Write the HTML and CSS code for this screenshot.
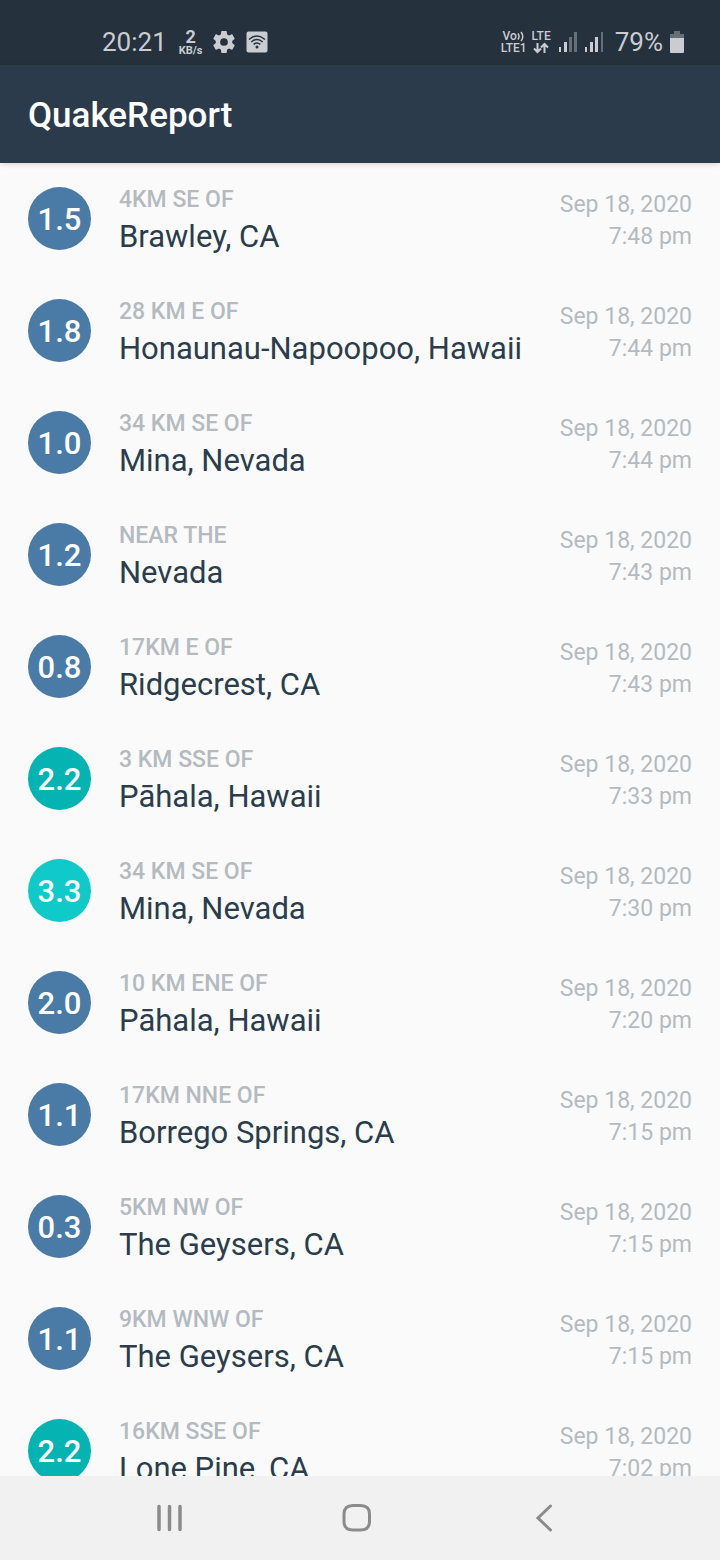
FILE: index.html
```html
<!DOCTYPE html>
<html lang="en">
<head>
<meta charset="utf-8">
<meta name="viewport" content="width=device-width, initial-scale=1">
<title>QuakeReport</title>
<link rel="stylesheet" href="styles.css">
</head>
<body>
<div class="status">
  <div class="status-group">
    <span class="clock">20:21</span>
    <span class="speed"><b class="speed-value">2</b><b class="speed-unit">KB/s</b></span>
    <svg class="gear" width="22" height="22" viewBox="2 2 20 20" aria-hidden="true"><path fill="currentColor" fill-rule="evenodd" d="M19.43 12.98c.04-.32.07-.64.07-.98s-.03-.66-.07-.98l2.11-1.65c.19-.15.24-.42.12-.64l-2-3.46c-.12-.22-.39-.3-.61-.22l-2.49 1c-.52-.4-1.08-.73-1.69-.98l-.38-2.65A.49.49 0 0 0 14 2h-4c-.25 0-.46.18-.49.42l-.38 2.65c-.61.25-1.17.59-1.69.98l-2.49-1c-.23-.09-.49 0-.61.22l-2 3.46c-.13.22-.07.49.12.64l2.11 1.65c-.04.32-.07.65-.07.98s.03.66.07.98l-2.11 1.65c-.19.15-.24.42-.12.64l2 3.46c.12.22.39.3.61.22l2.49-1c.52.4 1.08.73 1.69.98l.38 2.65c.03.24.24.42.49.42h4c.25 0 .46-.18.49-.42l.38-2.65c.61-.25 1.17-.59 1.69-.98l2.49 1c.23.09.49 0 .61-.22l2-3.46c.12-.22.07-.49-.12-.64zM12 15.500a3.500 3.500 0 1 1 0-7 3.500 3.500 0 0 1 0 7z"/></svg>
    <svg class="wifi" width="22" height="22" viewBox="0 0 22 22" aria-hidden="true"><rect x="0.500" y="0.500" width="21" height="21" rx="2" fill="currentColor"/><g fill="none" stroke="#25313d" stroke-width="1.500"><path d="M3 8.500Q11 1.500 19 8.500"/><path d="M5.300 11Q11 6 16.700 11"/><path d="M7.700 13.400Q11 10.500 14.300 13.400"/></g><circle cx="11" cy="16" r="1.500" fill="#25313d"/></svg>
  </div>
  <div class="status-group">
    <span class="carrier"><span class="volte">Vo<svg width="8" height="11" viewBox="0 0 8 11" aria-hidden="true"><path d="M1 2.500Q3 5.500 1 8.500M4 1Q7.500 5.500 4 10" fill="none" stroke="currentColor" stroke-width="1.500"/></svg></span><span>LTE1</span></span>
    <span class="carrier"><span>LTE</span><svg class="arrows" width="16" height="12" viewBox="0 0 16 12" aria-hidden="true"><path d="M4.500 1v9M1 6.500l3.500 3.500L8 6.500M11.500 11V2M8 5.500L11.500 2 15 5.500" fill="none" stroke="currentColor" stroke-width="2"/></svg></span>
    <svg class="signal" width="18" height="20" viewBox="0 0 18 20" aria-hidden="true"><g fill="currentColor"><path d="M0 15h2v5H0zM5 10h3v10H5z"/><path opacity=".4" d="M10 5h3v15h-3zM15 0h3v20h-3z"/></g></svg>
    <svg class="signal" width="18" height="20" viewBox="0 0 18 20" aria-hidden="true"><g fill="currentColor"><path d="M0 15h2v5H0zM5 10h3v10H5zM10 5h3v15h-3z"/><path opacity=".4" d="M16 0h2v20h-2z"/></g></svg>
    <span class="percent">79%</span>
    <svg class="battery" width="14" height="22" viewBox="0 0 14 22" aria-hidden="true"><path opacity=".4" fill="currentColor" d="M4 0h6v3h4v5H0V3h4z"/><path fill="currentColor" d="M0 7h14v14q0 1-1 1H1q-1 0-1-1z"/></svg>
  </div>
</div>
<header class="appbar"><h1 class="title">QuakeReport</h1></header>
<main class="list-area">
  <ul class="list">
    <li class="quake"><span class="mag">1.5</span><div class="where"><span class="offset">4KM SE OF</span><span class="place">Brawley, CA</span></div><div class="when"><span>Sep 18, 2020</span><span>7:48 pm</span></div></li>
    <li class="quake"><span class="mag">1.8</span><div class="where"><span class="offset">28 KM E OF</span><span class="place">Honaunau-Napoopoo, Hawaii</span></div><div class="when"><span>Sep 18, 2020</span><span>7:44 pm</span></div></li>
    <li class="quake"><span class="mag">1.0</span><div class="where"><span class="offset">34 KM SE OF</span><span class="place">Mina, Nevada</span></div><div class="when"><span>Sep 18, 2020</span><span>7:44 pm</span></div></li>
    <li class="quake"><span class="mag">1.2</span><div class="where"><span class="offset">NEAR THE</span><span class="place">Nevada</span></div><div class="when"><span>Sep 18, 2020</span><span>7:43 pm</span></div></li>
    <li class="quake"><span class="mag">0.8</span><div class="where"><span class="offset">17KM E OF</span><span class="place">Ridgecrest, CA</span></div><div class="when"><span>Sep 18, 2020</span><span>7:43 pm</span></div></li>
    <li class="quake"><span class="mag mag-2">2.2</span><div class="where"><span class="offset">3 KM SSE OF</span><span class="place">Pāhala, Hawaii</span></div><div class="when"><span>Sep 18, 2020</span><span>7:33 pm</span></div></li>
    <li class="quake"><span class="mag mag-3">3.3</span><div class="where"><span class="offset">34 KM SE OF</span><span class="place">Mina, Nevada</span></div><div class="when"><span>Sep 18, 2020</span><span>7:30 pm</span></div></li>
    <li class="quake"><span class="mag">2.0</span><div class="where"><span class="offset">10 KM ENE OF</span><span class="place">Pāhala, Hawaii</span></div><div class="when"><span>Sep 18, 2020</span><span>7:20 pm</span></div></li>
    <li class="quake"><span class="mag">1.1</span><div class="where"><span class="offset">17KM NNE OF</span><span class="place">Borrego Springs, CA</span></div><div class="when"><span>Sep 18, 2020</span><span>7:15 pm</span></div></li>
    <li class="quake"><span class="mag">0.3</span><div class="where"><span class="offset">5KM NW OF</span><span class="place">The Geysers, CA</span></div><div class="when"><span>Sep 18, 2020</span><span>7:15 pm</span></div></li>
    <li class="quake"><span class="mag">1.1</span><div class="where"><span class="offset">9KM WNW OF</span><span class="place">The Geysers, CA</span></div><div class="when"><span>Sep 18, 2020</span><span>7:15 pm</span></div></li>
    <li class="quake"><span class="mag mag-2">2.2</span><div class="where"><span class="offset">16KM SSE OF</span><span class="place">Lone Pine, CA</span></div><div class="when"><span>Sep 18, 2020</span><span>7:02 pm</span></div></li>
  </ul>
</main>
<nav class="navbar">
  <button class="nav-button" type="button" aria-label="Recent apps"><svg width="30" height="30" viewBox="0 0 30 30"><path d="M4 3.500v23M14.500 3.500v23M25 3.500v23" fill="none" stroke="currentColor" stroke-width="3.500" stroke-linecap="round"/></svg></button>
  <button class="nav-button" type="button" aria-label="Home"><svg width="30" height="30" viewBox="0 0 30 30"><path d="M11 2.500H18.500Q27.500 2.500 27.500 11V18.500Q27.500 27 18.500 27H11Q2 27 2 18.500V11Q2 2.500 11 2.500Z" fill="none" stroke="currentColor" stroke-width="3"/></svg></button>
  <button class="nav-button" type="button" aria-label="Back"><svg width="30" height="30" viewBox="0 0 30 30"><path d="M21.500 3L9 15 21.500 27" fill="none" stroke="currentColor" stroke-width="3" stroke-linecap="round"/></svg></button>
</nav>
</body>
</html>
```
FILE: styles.css
```css
* { box-sizing: border-box; }

body {
  margin: 0;
  height: 100vh;
  display: flex;
  flex-direction: column;
  background: #fafafa;
  font-family: Roboto, "Noto Sans", sans-serif;
}

.status {
  flex: none;
  display: flex;
  justify-content: space-between;
  padding: 18px 36px 0 102px;
  height: 65px;
  background: #25313d;
  color: #c9ccd1;
}

.status-group {
  display: flex;
  align-items: center;
  height: 48px;
}

.clock, .percent {
  font-size: 26px;
  line-height: 32px;
}

.speed {
  display: flex;
  flex-direction: column;
  align-items: center;
  margin-left: 12px;
}

.speed-value { font-size: 18px; line-height: 16px; }
.speed-unit { font-size: 11px; line-height: 11px; }
.gear { margin-left: 10px; }
.wifi { margin-left: 11px; }

.carrier {
  display: flex;
  flex-direction: column;
  align-items: center;
  font-size: 12px;
  line-height: 12px;
  font-weight: 500;
}

.carrier + .carrier { margin-left: 5px; }
.volte { display: flex; align-items: center; }
.signal { margin-left: 8px; }
.percent { margin-left: 12px; }
.battery { margin-left: 7px; }

.appbar {
  flex: none;
  display: flex;
  align-items: center;
  height: 98px;
  padding: 4px 28px 0;
  background: #2c3b4b;
  box-shadow: 0 1px 6px rgba(0, 0, 0, 0.16);
  z-index: 1;
}

.title {
  margin: 0;
  font-size: 35px;
  line-height: 42px;
  font-weight: 500;
  color: #fff;
}

.list-area {
  flex: 1;
  min-height: 0;
  overflow-y: auto;
  scrollbar-width: none;
}

.list { margin: 0; padding: 0; list-style: none; }

.quake {
  display: flex;
  align-items: center;
  gap: 28px;
  height: 112px;
  padding: 0 28px;
}

.mag {
  flex: none;
  width: 63px;
  height: 63px;
  margin-bottom: 2px;
  border-radius: 50%;
  background: #4a7ba7;
  color: #fff;
  font-size: 31px;
  line-height: 66px;
  font-weight: 500;
  text-align: center;
}

.mag-2 { background: #04b4b3; }
.mag-3 { background: #10cac9; }

.where, .when {
  display: flex;
  flex-direction: column;
  padding-top: 4px;
  white-space: nowrap;
}

.where { flex: 1; min-width: 0; }

.offset {
  font-size: 23px;
  line-height: 32px;
  font-weight: 500;
  color: #b4bac0;
}

.place {
  font-size: 31px;
  line-height: 42px;
  color: #2b3d4d;
}

.when {
  font-size: 23px;
  line-height: 32px;
  color: #b4bac0;
  text-align: right;
}

.navbar {
  flex: none;
  display: flex;
  height: 84px;
  padding: 0 82px 0 76px;
  background: #f1f1f1;
}

.nav-button {
  flex: 1;
  display: flex;
  align-items: center;
  justify-content: center;
  padding: 0;
  border: 0;
  background: none;
  color: #8b8b8b;
}
```
